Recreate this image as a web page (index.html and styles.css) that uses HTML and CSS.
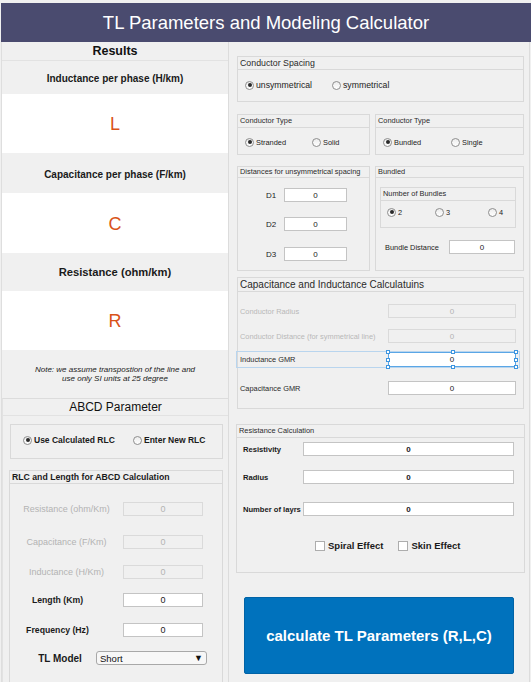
FILE: index.html
```html
<!DOCTYPE html>
<html lang="en">
<head>
<meta charset="utf-8">
<title>TL Parameters and Modeling Calculator</title>
<link rel="stylesheet" href="styles.css">
</head>
<body>
<div class="app">
  <header class="topbar"><h1>TL Parameters and Modeling Calculator</h1></header>
  <div class="main">
    <section class="left">
      <div class="results-title">Results</div>
      <div class="res-label r1">Inductance per phase (H/km)</div>
      <div class="res-value v1">L</div>
      <div class="res-label r2">Capacitance per phase (F/km)</div>
      <div class="res-value v2">C</div>
      <div class="res-label r3 big">Resistance (ohm/km)</div>
      <div class="res-value v3">R</div>
      <div class="note">Note: we assume transpostion of the line and<br>use only SI units at 25 degree</div>
      <div class="abcd">
        <div class="abcd-title">ABCD Parameter</div>
        <div class="box rlc-choice">
          <span class="radio w110 bold-lab"><span class="rb on"></span>Use Calculated RLC</span>
          <span class="radio bold-lab"><span class="rb"></span>Enter New RLC</span>
        </div>
        <div class="box rlc">
          <div class="gtitle rlc-title">RLC and Length for ABCD Calculation</div>
          <div class="lrow m18"><span class="llab dis">Resistance (ohm/Km)</span><span class="field dis lf">0</span></div>
          <div class="lrow m19"><span class="llab dis">Capacitance (F/Km)</span><span class="field dis lf">0</span></div>
          <div class="lrow m16"><span class="llab dis">Inductance (H/Km)</span><span class="field dis lf">0</span></div>
          <div class="lrow m14"><span class="llab strong shift">Length (Km)</span><span class="field lf">0</span></div>
          <div class="lrow m16"><span class="llab strong shift">Frequency (Hz)</span><span class="field lf">0</span></div>
          <div class="lrow model m14"><span class="llab strong model-lab">TL Model</span>
            <span class="dropdown"><span>Short</span><span class="caret">&#9660;</span></span></div>
        </div>
      </div>
    </section>

    <section class="right">
      <div class="box spacing">
        <div class="gtitle t-mid">Conductor Spacing</div>
        <div class="radios sp-radios">
          <span class="radio w87"><span class="rb on"></span>unsymmetrical</span>
          <span class="radio"><span class="rb"></span>symmetrical</span>
        </div>
      </div>

      <div class="pair types">
        <div class="box half-l">
          <div class="gtitle t-small">Conductor Type</div>
          <div class="radios small-radios">
            <span class="radio w67"><span class="rb on"></span>Stranded</span>
            <span class="radio"><span class="rb"></span>Solid</span>
          </div>
        </div>
        <div class="box half-r">
          <div class="gtitle t-small">Conductor Type</div>
          <div class="radios small-radios">
            <span class="radio w68"><span class="rb on"></span>Bundled</span>
            <span class="radio"><span class="rb"></span>Single</span>
          </div>
        </div>
      </div>

      <div class="pair dists">
        <div class="box half-l">
          <div class="gtitle t-small th10">Distances for unsymmetrical spacing</div>
          <div class="drow dm11"><span class="dlab">D1</span><span class="field df">0</span></div>
          <div class="drow dm15"><span class="dlab">D2</span><span class="field df">0</span></div>
          <div class="drow dm16"><span class="dlab">D3</span><span class="field df">0</span></div>
        </div>
        <div class="box half-r">
          <div class="gtitle t-small th10">Bundled</div>
          <div class="box nbundles">
            <div class="gtitle t-small">Number of Bundles</div>
            <div class="radios nb-radios">
              <span class="radio w48"><span class="rb on"></span>2</span>
              <span class="radio w53"><span class="rb"></span>3</span>
              <span class="radio"><span class="rb"></span>4</span>
            </div>
          </div>
          <div class="bdist"><span class="blab">Bundle Distance</span><span class="field bf">0</span></div>
        </div>
      </div>

      <div class="box capind">
        <div class="gtitle t-big">Capacitance and Inductance Calculatuins</div>
        <div class="crow cm13"><span class="clab dis">Conductor Radius</span><span class="field dis cf">0</span></div>
        <div class="crow cm11"><span class="clab dis">Conductor Distance (for symmetrical line)</span><span class="field dis cf">0</span></div>
        <div class="crow cm9 selected"><span class="clab">Inductance GMR</span>
          <span class="field cf sel-field">0
            <i class="h tl"></i><i class="h tm"></i><i class="h tr"></i>
            <i class="h ml"></i><i class="h mr"></i>
            <i class="h bl"></i><i class="h bm"></i><i class="h br"></i>
          </span>
        </div>
        <div class="crow cm15"><span class="clab">Capacitance GMR</span><span class="field cf">0</span></div>
      </div>

      <div class="box resist">
        <div class="gtitle t-small">Resistance Calculation</div>
        <div class="rrow rm4"><span class="rlab">Resistivity</span><span class="field rf">0</span></div>
        <div class="rrow rm14"><span class="rlab">Radius</span><span class="field rf">0</span></div>
        <div class="rrow rm18"><span class="rlab">Number of layrs</span><span class="field rf">0</span></div>
        <div class="checks">
          <span class="check"><span class="cb"></span>Spiral Effect</span>
          <span class="check"><span class="cb"></span>Skin Effect</span>
        </div>
      </div>

      <button class="calc" type="button">calculate TL Parameters (R,L,C)</button>
    </section>
  </div>
</div>
</body>
</html>
```

FILE: styles.css
```css
* { box-sizing: border-box; margin: 0; padding: 0; }
html, body { width: 531px; height: 682px; overflow: hidden; }
body {
  background: #f0f0f0;
  font-family: "Liberation Sans", Arial, sans-serif;
  color: #1e1e1e;
}
.app { padding: 3px 0 0 1px; display: flex; flex-direction: column; height: 682px; }

.topbar {
  height: 39px; flex: none; background: #4a4b6f;
  display: flex; align-items: center; justify-content: center;
}
.topbar h1 { font-weight: normal; font-size: 18.5px; color: #fff; letter-spacing: 0; }

.main { display: flex; flex: 1; min-height: 0; }

/* ---------- left ---------- */
.left {
  width: 228px; flex: none;
  border-left: 1px solid #dedede; border-right: 1px solid #dcdcdc;
  display: flex; flex-direction: column;
}
.left > *, .right > *, .abcd > * { flex: none; }
.results-title {
  height: 19px; border-bottom: 1px solid #e2e2e2;
  text-align: center; font-weight: bold; font-size: 12.5px; line-height: 19px; color: #111;
}
.res-label {
  display: flex; align-items: center; justify-content: center; padding-top: 2px;
  font-weight: bold; font-size: 10px; color: #1a1a1a;
}
.res-label.big { font-size: 11.2px; padding-top: 0; }
.r1 { height: 33px; }
.r2 { height: 40px; }
.r3 { height: 38px; }
.res-value {
  background: #fff; display: flex; align-items: center; justify-content: center;
  padding-top: 2px; font-size: 18px; color: #d95319;
}
.v1 { height: 59px; }
.v2 { height: 60px; }
.v3 { height: 59px; }
.note {
  height: 48px; display: flex; align-items: center; justify-content: center;
  text-align: center; font-style: italic; font-size: 8px; line-height: 9px; color: #222;
}
.abcd { flex: 1 1 auto !important; border-top: 1px solid #dcdcdc; border-left: 1px solid #e2e2e2; min-height: 0; }
.abcd-title {
  height: 17px; border-bottom: 1px solid #e2e2e2;
  text-align: center; font-size: 12px; line-height: 16px; color: #111;
}

.box { border: 1px solid #d9d9d9; }
.gtitle {
  height: 13px; border-bottom: 1px solid #d9d9d9;
  padding-left: 2px; line-height: 12px; white-space: nowrap; color: #2a2a2a;
}
.t-mid { font-size: 8.8px; }
.t-small { font-size: 7.4px; }
.t-big { font-size: 10px; }
.th10 { height: 11px; line-height: 10px; }

.rlc-choice {
  margin: 8px 0 0 7px; width: 213px; height: 35px;
  padding: 10px 0 0 12px; display: flex;
}
.bold-lab { font-weight: bold; font-size: 8.5px; color: #1a1a1a; }
.rlc {
  margin: 11px 0 0 6px; width: 214px; height: 240px;
}
.rlc-title { font-weight: bold; font-size: 8.7px; color: #1a1a1a; padding-left: 2px; }
.lrow {
  display: grid; grid-template-columns: 1fr 80px; padding-right: 19px; height: 14px;
  align-items: center;
}
.llab { text-align: center; font-size: 9px; white-space: nowrap; }
.llab.dis { color: #b3b3b3; }
.llab.strong { font-weight: bold; font-size: 8.7px; color: #1a1a1a; }
.llab.shift { padding-right: 18px; }
.lrow.model { grid-template-columns: 86px 111px; padding-right: 0; }
.model-lab { font-size: 10px !important; padding-left: 14px; }
.m14 { margin-top: 14px; }
.m16 { margin-top: 16px; }
.m18 { margin-top: 18px; }
.m19 { margin-top: 19px; }

.field {
  height: 14px; background: #fff; border: 1px solid #c4c4c4;
  display: flex; align-items: center; justify-content: center;
  font-size: 8.5px; color: #1a1a1a; flex: none;
}
.field.dis { background: #f0f0f0; border-color: #dadada; color: #b3b3b3; }
.lf { width: 80px; font-size: 9px; }

.dropdown {
  height: 14px; border: 1px solid #a8a8a8; border-radius: 3px; background: #f7f7f7;
  display: flex; align-items: center; justify-content: space-between;
  padding: 0 3px 0 3px; font-size: 9.5px; color: #111;
}
.caret { font-size: 9px; color: #111; }

/* radios */
.radio { display: inline-flex; align-items: center; white-space: nowrap; height: 10px; }
.rb {
  width: 9px; height: 9px; border-radius: 50%; border: 1px solid #8e8e8e;
  background: linear-gradient(#ececec, #ffffff);
  margin-right: 2px; flex: none;
  display: flex; align-items: center; justify-content: center;
}
.rb.on::after { content: ""; width: 4px; height: 4px; border-radius: 50%; background: #2a2a2a; }
.w48 { width: 48px; } .w53 { width: 53px; } .w67 { width: 67px; } .w68 { width: 68px; }
.w87 { width: 87px; } .w110 { width: 110px; }

/* ---------- right ---------- */
.right {
  width: 301px; flex: none; border-right: 1px solid #dcdcdc;
  padding: 0 5px 0 8px; display: flex; flex-direction: column;
}
.spacing { margin-top: 14px; height: 46px; }
.radios { display: flex; }
.sp-radios { padding: 10px 0 0 7px; font-size: 8.7px; color: #222; }
.small-radios { padding: 9px 0 0 7px; font-size: 7.4px; color: #222; }
.pair { display: flex; justify-content: space-between; }
.half-l { width: 133px; }
.half-r { width: 149px; }
.types { margin-top: 12px; height: 41px; }
.types > .box { height: 41px; }
.dists { margin-top: 11px; height: 105px; }
.dists > .box { height: 105px; }
.drow { display: flex; align-items: center; padding-left: 28px; height: 14px; }
.dlab { width: 18px; font-size: 8px; color: #222; }
.df { width: 63px; font-size: 8px; }
.dm11 { margin-top: 10px; } .dm15 { margin-top: 15px; } .dm16 { margin-top: 16px; }

.nbundles { margin: 9px 0 0 4px; width: 136px; height: 41px; }
.nb-radios { padding: 6px 0 0 6px; font-size: 7.4px; color: #222; }
.bdist { display: flex; align-items: center; margin-top: 12px; padding-left: 9px; height: 14px; }
.blab { width: 64px; font-size: 7.4px; color: #222; }
.bf { width: 66px; font-size: 8px; }

.capind { margin-top: 6px; height: 132px; }
.capind .gtitle { height: 14px; line-height: 13px; }
.crow { display: flex; align-items: center; justify-content: space-between; padding: 0 7px 0 2px; height: 14px; }
.clab { font-size: 7.4px; color: #2a2a2a; white-space: nowrap; }
.clab.dis { color: #b8b8b8; }
.cf { width: 128px; font-size: 8px; }
.cm9 { margin-top: 9px; } .cm11 { margin-top: 11px; } .cm13 { margin-top: 12px; } .cm15 { margin-top: 15px; }
.selected { position: relative; }
.selected::before {
  content: ""; position: absolute; left: -2px; right: 3px; top: -1px; bottom: -2px;
  border: 1px solid #b9d5ee; pointer-events: none;
}
.sel-field { position: relative; border-color: #5aa6e6; height: 15px; }
.h {
  position: absolute; width: 4px; height: 4px; background: #fff; border: 1px solid #3d95e0;
}
.tl { left: -3px; top: -3px; } .tm { left: 62px; top: -3px; } .tr { right: -3px; top: -3px; }
.ml { left: -3px; top: 5px; } .mr { right: -3px; top: 5px; }
.bl { left: -3px; bottom: -3px; } .bm { left: 62px; bottom: -3px; } .br { right: -3px; bottom: -3px; }

.resist { margin: 15px 0 0 -1px; height: 149px; width: 289px; }
.rrow { display: flex; align-items: center; padding-left: 6px; height: 14px; }
.rlab { width: 60px; font-weight: bold; font-size: 7.6px; color: #1a1a1a; white-space: nowrap; }
.rf { width: 211px; font-size: 8px; font-weight: bold; }
.rm4 { margin-top: 4px; } .rm14 { margin-top: 14px; } .rm18 { margin-top: 18px; }
.checks { display: flex; margin-top: 24px; padding-left: 78px; }
.check { display: inline-flex; align-items: center; font-weight: bold; font-size: 9.5px; color: #1a1a1a; margin-right: 15px; }
.cb { width: 10px; height: 10px; border: 1px solid #adadad; background: #fff; margin-right: 3px; }

.calc {
  margin: 24px 0 0 7px; width: 270px; height: 77px;
  background: #0072bd; border: 1px solid #0063a6; border-radius: 2px;
  color: #fff; font-family: "Liberation Sans", Arial, sans-serif;
  font-weight: bold; font-size: 15px;
}
```
